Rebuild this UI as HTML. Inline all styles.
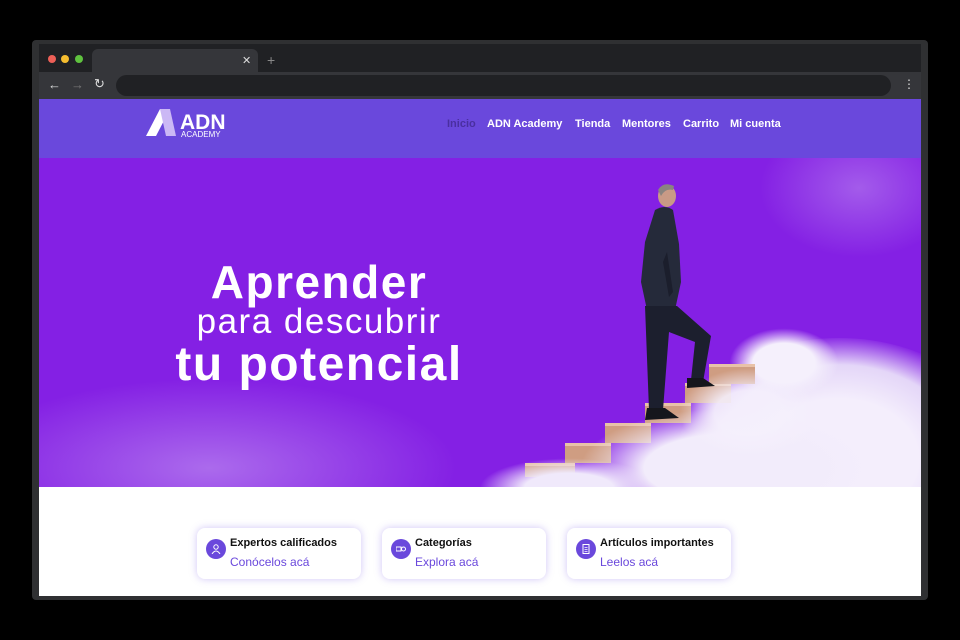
<!DOCTYPE html>
<html><head><meta charset="utf-8"><style>
*{margin:0;padding:0;box-sizing:border-box}
body{width:960px;height:640px;background:#000;position:relative;overflow:hidden;font-family:"Liberation Sans",sans-serif}
.frame{position:absolute;left:32px;top:40px;width:896px;height:560px;background:#2f3032;border-radius:4px}
.tabbar{position:absolute;left:39px;top:44px;width:882px;height:28px;background:#202124}
.dot{position:absolute;top:55px;width:8px;height:8px;border-radius:50%}
.tab{position:absolute;left:92px;top:49px;width:166px;height:23px;background:#35363a;border-radius:6px 6px 0 0}
.toolbar{position:absolute;left:39px;top:72px;width:882px;height:27px;background:#35363a}
.url{position:absolute;left:116px;top:75px;width:775px;height:21px;background:#202124;border-radius:11px}
.page{position:absolute;left:39px;top:99px;width:882px;height:497px;background:#fff;overflow:hidden}
.nav{position:absolute;left:0;top:0;width:882px;height:59px;background:#6a48dc}
.nav a{position:absolute;top:19px;font-size:11px;font-weight:bold;color:#fff}
.hero{position:absolute;left:0;top:59px;width:882px;height:329px;background:#8420e4;overflow:hidden}
.h{position:absolute;color:#fff;text-align:center;width:500px;left:30px;white-space:nowrap}
.card{position:absolute;top:429px;width:164px;height:51px;background:#fff;border-radius:8px;box-shadow:0 0 8px rgba(120,90,230,.35)}
.card .ic{position:absolute;left:9px;top:11px;width:20px;height:20px;border-radius:50%;background:#6a48dc}
.card .ic svg{position:absolute;left:5px;top:5px}
.card b{position:absolute;left:33px;top:9px;font-size:11px;color:#111}
.card span{position:absolute;left:33px;top:27px;font-size:12px;color:#6a48dc}
.st{position:absolute;width:46px;height:20px;background:linear-gradient(#e8c2a8 0 3px,#cf9d82 3px)}
</style></head><body>
<div class="frame"></div>
<div class="tabbar"></div>
<div class="dot" style="left:48px;background:#ed5f57"></div>
<div class="dot" style="left:61px;background:#f5bd2f"></div>
<div class="dot" style="left:75px;background:#5fc23f"></div>
<div class="tab"></div>
<div style="position:absolute;left:242px;top:54px;color:#ddd;font-size:11px">✕</div>
<div style="position:absolute;left:267px;top:52px;color:#888;font-size:14px">+</div>
<div class="toolbar"></div>
<div style="position:absolute;left:48px;top:77px;color:#ddd;font-size:13px">←</div>
<div style="position:absolute;left:71px;top:77px;color:#777;font-size:13px">→</div>
<div style="position:absolute;left:94px;top:76px;color:#ddd;font-size:13px">↻</div>
<div class="url"></div>
<div style="position:absolute;left:903px;top:77px;color:#ddd;font-size:12px">⋮</div>
<div class="page">
 <div class="nav">
  <svg style="position:absolute;left:107px;top:10px" width="90" height="30" viewBox="0 0 90 30">
   <polygon points="0,27 14,0 24,0 10,27" fill="#fff"/>
   <polygon points="14,0 24,0 30,27 20,27" fill="#cbb8f5"/>
   <text x="34" y="20" font-size="21" font-weight="bold" fill="#fff" font-family="Liberation Sans">ADN</text>
   <text x="35" y="28" font-size="8" fill="#fff" font-family="Liberation Sans">ACADEMY</text>
  </svg>
  <a style="left:408px;color:#4a2fa0">Inicio</a>
  <a style="left:448px">ADN Academy</a>
  <a style="left:536px">Tienda</a>
  <a style="left:583px">Mentores</a>
  <a style="left:644px">Carrito</a>
  <a style="left:691px">Mi cuenta</a>
 </div>
 <div class="hero">
  <div style="position:absolute;left:-80px;top:220px;width:500px;height:180px;background:radial-gradient(ellipse at center,rgba(210,180,245,.5),rgba(132,32,228,0) 70%)"></div>
  <div style="position:absolute;left:720px;top:-40px;width:200px;height:140px;background:radial-gradient(ellipse at center,rgba(210,180,245,.4),rgba(132,32,228,0) 70%)"></div>
  <div class="h" style="top:97px;font-size:46px;font-weight:bold;letter-spacing:1.5px">Aprender</div>
  <div class="h" style="top:144px;font-size:35px;letter-spacing:1.5px">para descubrir</div>
  <div class="h" style="top:179px;font-size:48px;font-weight:bold;letter-spacing:1.5px">tu potencial</div>
  <div style="position:absolute;left:640px;top:180px;width:320px;height:220px;border-radius:50%;background:radial-gradient(ellipse at 50% 55%,#f4eefc 35%,#e4d6f8 55%,rgba(200,170,240,0) 72%)"></div>
  <div style="position:absolute;left:690px;top:170px;width:110px;height:70px;border-radius:50%;background:radial-gradient(ellipse,#f5f0fc 40%,rgba(230,215,250,0) 70%)"></div>
  <div class="st" style="left:486px;top:305px;height:14px;width:50px"></div>
  <div class="st" style="left:526px;top:285px"></div>
  <div class="st" style="left:566px;top:265px"></div>
  <div class="st" style="left:606px;top:245px"></div>
  <div class="st" style="left:646px;top:225px"></div>
  <div class="st" style="left:670px;top:206px"></div>
  <div style="position:absolute;left:540px;top:250px;width:300px;height:120px;border-radius:50%;background:radial-gradient(ellipse,#f2ecfb 40%,rgba(220,200,245,0) 70%)"></div>
  <div style="position:absolute;left:440px;top:300px;width:180px;height:60px;border-radius:50%;background:radial-gradient(ellipse,#f0e9fb 35%,rgba(220,200,245,0) 70%)"></div>
  <div style="position:absolute;left:640px;top:210px;width:140px;height:90px;border-radius:50%;background:radial-gradient(ellipse,rgba(245,240,252,.9) 35%,rgba(230,215,250,0) 70%)"></div>
  <svg style="position:absolute;left:580px;top:24px" width="110" height="250" viewBox="0 0 110 250">
   <ellipse cx="48" cy="14" rx="9" ry="11" fill="#c99a86"/>
   <path d="M39 8 Q44 -1 55 4 L54 8 Q46 6 42 14 Z" fill="#8a8480"/>
   <path d="M36 28 Q46 22 54 28 L60 62 L62 100 L56 128 L28 128 L22 100 L26 60 Z" fill="#252a3a"/>
   <path d="M48 70 L54 110 L50 115 L44 80 Z" fill="#1b1e2c"/>
   <path d="M26 124 L58 124 L92 154 L84 200 L72 198 L76 160 L50 150 L44 228 L30 228 Z" fill="#1c1f2e"/>
   <path d="M68 196 L84 196 L96 204 L68 206 Z" fill="#15161c"/>
   <path d="M28 226 L46 226 L60 236 L26 238 Z" fill="#15161c"/>
  </svg>
 </div>
 <div class="card" style="left:158px"><div class="ic"><svg width="10" height="10" viewBox="0 0 10 10"><circle cx="5" cy="3" r="2.2" fill="none" stroke="#fff" stroke-width="1"/><path d="M1 10 Q5 4 9 10" fill="none" stroke="#fff" stroke-width="1"/></svg></div><b>Expertos calificados</b><span>Conócelos acá</span></div>
 <div class="card" style="left:343px"><div class="ic"><svg width="10" height="10" viewBox="0 0 10 10"><rect x="0" y="3" width="5" height="4" fill="none" stroke="#fff" stroke-width="1"/><circle cx="7.5" cy="5" r="2" fill="none" stroke="#fff" stroke-width="1"/></svg></div><b>Categorías</b><span>Explora acá</span></div>
 <div class="card" style="left:528px"><div class="ic"><svg width="10" height="10" viewBox="0 0 10 10"><rect x="2" y="0.5" width="6" height="9" fill="none" stroke="#fff" stroke-width="1"/><path d="M3.5 3.5H6.5M3.5 5.5H6.5M3.5 7.5H6.5" stroke="#fff" stroke-width=".8"/></svg></div><b>Artículos importantes</b><span>Leelos acá</span></div>
</div>
</body></html>
